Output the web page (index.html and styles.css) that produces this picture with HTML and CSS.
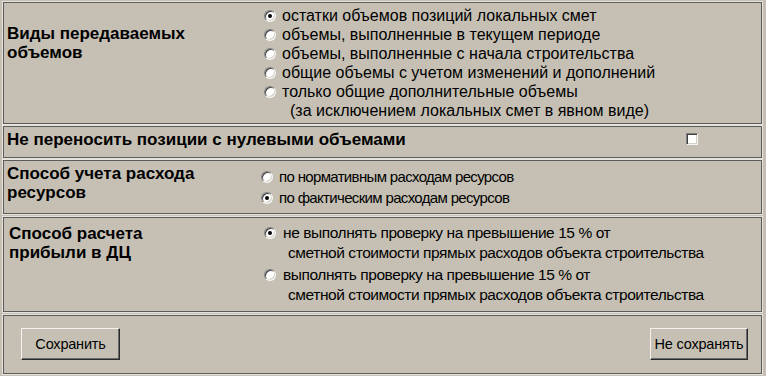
FILE: index.html
```html
<!DOCTYPE html>
<html lang="ru">
<head>
<meta charset="utf-8">
<title>Параметры</title>
<link rel="stylesheet" href="styles.css">
</head>
<body>
<div class="page">
  <section class="panel panel-volumes">
    <div class="label label-volumes">Виды передаваемых<br>объемов</div>
    <div class="options options-volumes">
      <label class="opt"><input type="radio" name="v" checked><span>остатки объемов позиций локальных смет</span></label>
      <label class="opt"><input type="radio" name="v"><span>объемы, выполненные в текущем периоде</span></label>
      <label class="opt"><input type="radio" name="v"><span>объемы, выполненные с начала строительства</span></label>
      <label class="opt"><input type="radio" name="v"><span>общие объемы с учетом изменений и дополнений</span></label>
      <label class="opt"><input type="radio" name="v"><span>только общие дополнительные объемы</span></label>
      <div class="cont cont-volumes">(за исключением локальных смет в явном виде)</div>
    </div>
  </section>

  <section class="panel panel-zero">
    <div class="label">Не переносить позиции с нулевыми объемами</div>
    <input type="checkbox" class="check">
  </section>

  <section class="panel panel-resources">
    <div class="label label-resources">Способ учета расхода<br>ресурсов</div>
    <div class="options options-resources">
      <label class="opt"><input type="radio" name="r"><span>по нормативным расходам ресурсов</span></label>
      <label class="opt"><input type="radio" name="r" checked><span>по фактическим расходам ресурсов</span></label>
    </div>
  </section>

  <section class="panel panel-profit">
    <div class="label label-profit">Способ расчета<br>прибыли в ДЦ</div>
    <div class="options options-profit">
      <label class="opt"><input type="radio" name="p" checked><span>не выполнять проверку на превышение 15 % от</span></label>
      <div class="cont cont-profit">сметной стоимости прямых расходов объекта строительства</div>
      <label class="opt opt-gap"><input type="radio" name="p"><span>выполнять проверку на превышение 15 % от</span></label>
      <div class="cont cont-profit">сметной стоимости прямых расходов объекта строительства</div>
    </div>
  </section>

  <section class="panel panel-buttons">
    <button class="btn btn-save">Сохранить</button>
    <button class="btn btn-cancel">Не сохранять</button>
  </section>
</div>
</body>
</html>
```

FILE: styles.css
```css
html, body {
  margin: 0;
  padding: 0;
  background: #c6c0b4;
}
body {
  width: 766px;
  height: 376px;
  overflow: hidden;
  font-family: "Liberation Sans", Arial, sans-serif;
  color: #000;
}
.page {
  padding: 2px 4px 0 3px;
  display: flex;
  flex-direction: column;
  gap: 2px;
}
.panel {
  border: 1px solid #5c5c5c;
  box-shadow: 0 0 0 1px #e6e3dc;
  display: flex;
  box-sizing: border-box;
}
.label {
  font-weight: bold;
  font-size: 17px;
  line-height: 19px;
  padding-left: 3px;
  white-space: nowrap;
}
.options {
  display: flex;
  flex-direction: column;
  font-size: 16px;
  line-height: 19px;
  white-space: nowrap;
}
.opt {
  display: flex;
  align-items: center;
  gap: 6px;
  height: 19px;
}
.opt input {
  appearance: none;
  -webkit-appearance: none;
  margin: 0;
  width: 12px;
  height: 12px;
  border-radius: 50%;
  background: #fff;
  box-sizing: border-box;
  border: 1px solid;
  border-color: #808080 #f4f4f4 #f4f4f4 #808080;
  box-shadow: inset 1px 1px 0 #404040, inset -1px -1px 0 #d4d0c8;
  position: relative;
  flex: none;
}
.opt input:checked::after {
  content: "";
  position: absolute;
  left: 3px;
  top: 3px;
  width: 4px;
  height: 4px;
  border-radius: 50%;
  background: #000;
}

/* section 1 */
.panel-volumes {
  height: 122px;
}
.label-volumes {
  width: 257px;
  padding-top: 21px;
}
.options-volumes {
  padding-top: 3px;
}
.cont-volumes {
  padding-left: 26px;
}

/* section 2 */
.panel-zero {
  height: 32px;
  align-items: flex-start;
  justify-content: space-between;
  padding-right: 63px;
}
.panel-zero .label { padding-top: 3px; }
.check {
  appearance: none;
  -webkit-appearance: none;
  margin: 6px 0 0;
  width: 12px;
  height: 12px;
  background: #fff;
  box-sizing: border-box;
  border: 1px solid;
  border-color: #808080 #f4f4f4 #f4f4f4 #808080;
  box-shadow: inset 1px 1px 0 #404040, inset -1px -1px 0 #d4d0c8;
}

/* section 3 */
.panel-resources {
  height: 54px;
}
.label-resources {
  width: 254px;
  padding-top: 3px;
}
.options-resources {
  padding-top: 6px;
  gap: 2px;
  font-size: 15px;
  letter-spacing: -0.66px;
}

/* section 4 */
.panel-profit {
  height: 95px;
  margin-top: 1px;
}
.label-profit {
  width: 255px;
  padding-top: 6px;
  padding-left: 5px;
}
.options-profit {
  padding-top: 5px;
  font-size: 15.5px;
  letter-spacing: -0.43px;
  line-height: 20px;
}
.options-profit .opt { height: 20px; gap: 7px; }
.opt-gap { margin-top: 2px; }
.cont-profit {
  padding-left: 24px;
}

/* section 5 */
.panel-buttons {
  height: 59px;
  margin-top: 1px;
  align-items: center;
  justify-content: space-between;
  padding: 0 13px 1px 17px;
}
.btn {
  font-family: "Liberation Sans", Arial, sans-serif;
  font-size: 14.5px;
  letter-spacing: -0.2px;
  color: #000;
  background: #c6c0b4;
  height: 32px;
  border: 1px solid;
  border-color: #f4f2ee #2a2a2a #2a2a2a #f4f2ee;
  box-shadow: inset -1px -1px 0 #6a6a6a;
  padding: 0;
}
.btn-save { width: 99px; }
.btn-cancel { width: 98px; }
```
